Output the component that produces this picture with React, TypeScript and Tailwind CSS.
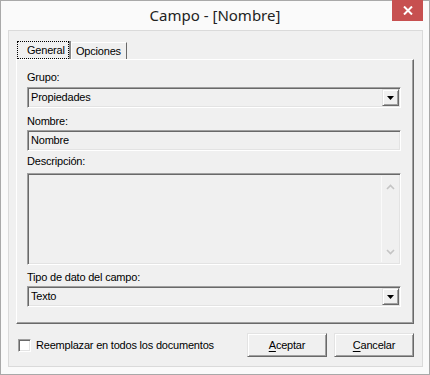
import { ReactNode } from 'react';

// 3D edges, classic Windows look
const sunken =
  'border border-t-[#a0a0a0] border-l-[#a0a0a0] border-r-white border-b-white shadow-[inset_1px_1px_0_#696969,inset_-1px_-1px_0_#e3e3e3]';
const raised =
  'border border-t-[#e3e3e3] border-l-[#e3e3e3] border-r-[#696969] border-b-[#696969] shadow-[inset_1px_1px_0_#ffffff,inset_-1px_-1px_0_#a0a0a0]';

const DropArrow = () => (
  <svg width="7" height="4" viewBox="0 0 7 4">
    <polygon points="0,0 7,0 3.5,4" fill="#000" />
  </svg>
);

const Combo = ({ value }: { value: string }) => (
  <div className={`flex h-[21px] w-[374px] items-stretch bg-[#f0f0f0] p-[1px] ${sunken}`}>
    <div className="flex flex-1 items-center pl-[2px] text-black">{value}</div>
    <div className={`flex w-[17px] items-center justify-center bg-[#f0f0f0] ${raised}`}>
      <DropArrow />
    </div>
  </div>
);

const Label = ({ children, className = '' }: { children: ReactNode; className?: string }) => (
  <div className={`h-[13px] leading-[13px] text-black ${className}`}>{children}</div>
);

const App = () => {
  return (
    <div className="flex h-[375px] w-[430px] flex-col border border-[#a9a9a9] bg-[#fafafa] font-['Liberation_Sans',Arial,sans-serif] text-[11px] tracking-[-0.2px]">
      {/* barra de titulo */}
      <div className="relative flex h-[29px] shrink-0 items-center justify-center">
        <span className="pb-[1px] font-['Noto_Sans',sans-serif] text-[15px] tracking-normal text-[#222]">
          Campo - [Nombre]
        </span>
        <div className="absolute top-[-1px] right-[6px] flex h-[21px] w-[31px] items-center justify-center bg-[#c75050]">
          <svg width="10" height="9" viewBox="0 0 10 9">
            <path d="M1 0.5 L9 8.5 M9 0.5 L1 8.5" stroke="#fff" strokeWidth="2" />
          </svg>
        </div>
      </div>

      {/* area cliente */}
      <div className="mr-[6px] ml-[7px] flex h-[337px] flex-col border border-[#dadada] bg-[#f0f0f0] pt-[10px] pr-[8px] pl-[7px]">
        {/* pestañas */}
        <div className="flex h-[18px] items-end">
          <div className="ml-[1px] h-[18px] border-r-2 border-r-[#8c8c8c]">
            <div className="flex h-[18px] w-[52px] items-center border border-dotted border-black pl-[9px] text-black">
              General
            </div>
          </div>
          <div className="flex h-[17px] w-[56px] items-center border-t border-r border-l border-t-white border-r-[#696969] border-l-white pl-[4px] text-black">
            Opciones
          </div>
        </div>

        {/* panel */}
        <div className="flex h-[265px] w-[398px] flex-col border-t border-r border-b border-l border-t-white border-r-[#696969] border-b-[#696969] border-l-white pl-[10px] shadow-[inset_-1px_-1px_0_#a0a0a0]">
          <Label className="mt-[11px]">Grupo:</Label>
          <div className="mt-[3px]">
            <Combo value="Propiedades" />
          </div>

          <Label className="mt-[7px]">Nombre:</Label>
          <div className={`mt-[2px] flex h-[21px] w-[374px] items-center bg-[#f0f0f0] pl-[3px] text-black ${sunken}`}>
            Nombre
          </div>

          <Label className="mt-[4px]">Descripción:</Label>
          <div className={`mt-[5px] flex h-[92px] w-[374px] justify-end bg-[#f0f0f0] p-[2px] ${sunken}`}>
            <div className="flex w-[17px] flex-col items-center justify-between border-l border-l-[#fafafa] pt-[8px] pb-[7px]">
              <svg width="9" height="6" viewBox="0 0 9 6">
                <polyline points="1,5 4.5,1.5 8,5" fill="none" stroke="#c4c4c4" strokeWidth="1.6" />
              </svg>
              <svg width="9" height="6" viewBox="0 0 9 6">
                <polyline points="1,1 4.5,4.5 8,1" fill="none" stroke="#c4c4c4" strokeWidth="1.6" />
              </svg>
            </div>
          </div>

          <Label className="mt-[6px]">Tipo de dato del campo:</Label>
          <div className="mt-[2px]">
            <Combo value="Texto" />
          </div>
        </div>

        {/* pie */}
        <div className="mt-[9px] flex h-[24px] items-center">
          <div className={`ml-[2px] h-[13px] w-[13px] bg-white ${sunken}`} />
          <span className="ml-[5px] text-black">Reemplazar en todos los documentos</span>
          <div className="ml-auto flex gap-[7px]">
            <button className={`h-[24px] w-[80px] bg-[#f0f0f0] text-black ${raised}`}>
              <span className="underline underline-offset-[2px]">A</span>ceptar
            </button>
            <button className={`h-[24px] w-[80px] bg-[#f0f0f0] text-black ${raised}`}>
              <span className="underline underline-offset-[2px]">C</span>ancelar
            </button>
          </div>
        </div>
      </div>
    </div>
  );
};

export default App;
